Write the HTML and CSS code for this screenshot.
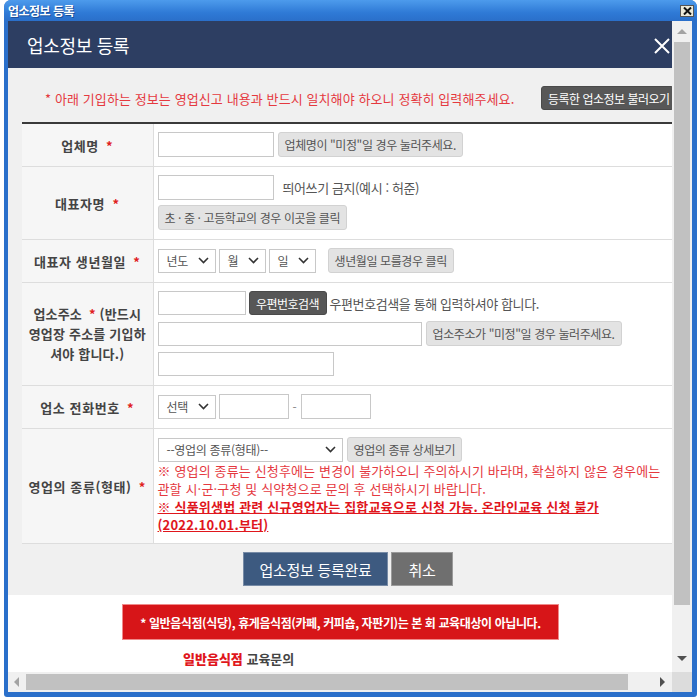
FILE: index.html
```html
<!DOCTYPE html>
<html lang="ko">
<head>
    <meta charset="UTF-8">
    <title>업소정보 등록</title>
    <link rel="stylesheet" href="styles.css">
</head>
<body>

<div class="window">
    <div class="titlebar">
        <span class="titlebar-text">업소정보 등록</span>
        <span class="titlebar-close">
            <svg width="9" height="8" viewBox="0 0 9 8"><path d="M1 0.5 L8 7.5 M8 0.5 L1 7.5" stroke="#111" stroke-width="2"/></svg>
        </span>
    </div>

    <div class="frame">
        <div class="viewport">
            <div class="modal">
                <div class="modal-head">
                    <h2>업소정보 등록</h2>
                    <span class="modal-x">
                        <svg width="16" height="16" viewBox="0 0 16 16"><path d="M1 1 L15 15 M15 1 L1 15" stroke="#fff" stroke-width="2"/></svg>
                    </span>
                </div>

                <div class="modal-body">
                    <!-- 안내 문구 -->
                    <div class="notice">
                        <p>* 아래 기입하는 정보는 영업신고 내용과 반드시 일치해야 하오니 정확히 입력해주세요.</p>
                        <button class="btn-dark btn-load">등록한 업소정보 불러오기</button>
                    </div>

                    <table class="form">
                        <colgroup>
                            <col class="col-label">
                            <col>
                        </colgroup>
                        <tr>
                            <th>업체명 <em>*</em></th>
                            <td>
                                <div class="line">
                                    <span class="input w116"></span>
                                    <button class="btn-gray">업체명이 "미정"일 경우 눌러주세요.</button>
                                </div>
                            </td>
                        </tr>
                        <tr>
                            <th>대표자명 <em>*</em></th>
                            <td>
                                <div class="line">
                                    <span class="input w116"></span>
                                    <span class="hint">띄어쓰기 금지(예시 : 허준)</span>
                                </div>
                                <div class="line">
                                    <button class="btn-gray">초 · 중 · 고등학교의 경우 이곳을 클릭</button>
                                </div>
                            </td>
                        </tr>
                        <tr>
                            <th>대표자 생년월일 <em>*</em></th>
                            <td>
                                <div class="line tight">
                                    <span class="select w58">년도 <svg width="11" height="7" viewBox="0 0 11 7"><path d="M1 1 L5.5 5.5 L10 1" fill="none" stroke="#333" stroke-width="1.6"/></svg></span>
                                    <span class="select w47">월 <svg width="11" height="7" viewBox="0 0 11 7"><path d="M1 1 L5.5 5.5 L10 1" fill="none" stroke="#333" stroke-width="1.6"/></svg></span>
                                    <span class="select w47">일 <svg width="11" height="7" viewBox="0 0 11 7"><path d="M1 1 L5.5 5.5 L10 1" fill="none" stroke="#333" stroke-width="1.6"/></svg></span>
                                    <button class="btn-gray gap-left">생년월일 모를경우 클릭</button>
                                </div>
                            </td>
                        </tr>
                        <tr>
                            <th class="multi">업소주소 <em>*</em> (반드시<br>영업장 주소를 기입하<br>셔야 합니다.)</th>
                            <td>
                                <div class="line rows6 tight">
                                    <span class="input w88"></span>
                                    <button class="btn-dark btn-zip">우편번호검색</button>
                                    <span class="hint">우편번호검색을 통해 입력하셔야 합니다.</span>
                                </div>
                                <div class="line rows6">
                                    <span class="input w264"></span>
                                    <button class="btn-gray">업소주소가 "미정"일 경우 눌러주세요.</button>
                                </div>
                                <div class="line rows6">
                                    <span class="input w176"></span>
                                </div>
                            </td>
                        </tr>
                        <tr>
                            <th>업소 전화번호 <em>*</em></th>
                            <td>
                                <div class="line tight">
                                    <span class="select w58">선택 <svg width="11" height="7" viewBox="0 0 11 7"><path d="M1 1 L5.5 5.5 L10 1" fill="none" stroke="#333" stroke-width="1.6"/></svg></span>
                                    <span class="input w70"></span>
                                    <span class="dash">-</span>
                                    <span class="input w70"></span>
                                </div>
                            </td>
                        </tr>
                        <tr>
                            <th>영업의 종류(형태) <em>*</em></th>
                            <td>
                                <div class="line">
                                    <span class="select w185">--영업의 종류(형태)-- <svg width="11" height="7" viewBox="0 0 11 7"><path d="M1 1 L5.5 5.5 L10 1" fill="none" stroke="#333" stroke-width="1.6"/></svg></span>
                                    <button class="btn-gray">영업의 종류 상세보기</button>
                                </div>
                                <p class="warn">※ 영업의 종류는 신청후에는 변경이 불가하오니 주의하시기 바라며, 확실하지 않은 경우에는 관할 시·군·구청 및 식약청으로 문의 후 선택하시기 바랍니다.</p>
                                <p class="warn strong">※ 식품위생법 관련 신규영업자는 집합교육으로 신청 가능. 온라인교육 신청 불가 (2022.10.01.부터)</p>
                            </td>
                        </tr>
                    </table>

                    <div class="actions">
                        <button class="btn-submit">업소정보 등록완료</button>
                        <button class="btn-cancel">취소</button>
                    </div>
                </div>

                <div class="modal-foot">
                    <div class="alert">* 일반음식점(식당), 휴게음식점(카페, 커피숍, 자판기)는 본 회 교육대상이 아닙니다.</div>
                    <p class="contact"><b>일반음식점</b> 교육문의</p>
                </div>
            </div>
        </div>

        <!-- 스크롤바 -->
        <div class="vscroll">
            <span class="arrow up"></span>
            <span class="vthumb"></span>
            <span class="arrow down"></span>
        </div>
        <div class="hscroll">
            <span class="arrow left"></span>
            <span class="hthumb"></span>
            <span class="arrow right"></span>
        </div>
        <div class="corner"></div>
    </div>
</div>

</body>
</html>
```

FILE: styles.css
```css
* {
    margin: 0;
    padding: 0;
    box-sizing: border-box;
}

body {
    font-family: 'Noto Sans CJK KR', 'Noto Sans', sans-serif;
    background: #fff;
    width: 700px;
    height: 700px;
    overflow: hidden;
}

button {
    font-family: inherit;
    cursor: pointer;
}

/* 창 테두리 */
.window {
    margin-left: 4px;
    width: 693px;
    height: 697px;
    background: #2a6fca;
    border-radius: 7px 7px 3px 3px;
    display: flex;
    flex-direction: column;
}

.titlebar {
    height: 21px;
    display: flex;
    align-items: center;
    justify-content: space-between;
    padding: 0 3px 0 4px;
    background: linear-gradient(#4d9bec, #2f7ad6 60%, #2a6fca);
    border-radius: 7px 7px 0 0;
}

.titlebar-text {
    color: #fff;
    font-size: 12px;
    font-weight: bold;
    letter-spacing: -0.5px;
    text-shadow: 1px 1px 0 #1b4f9a;
}

.titlebar-close {
    width: 14px;
    height: 12px;
    background: #ece9d8;
    border: 1px solid #555;
    display: flex;
    align-items: center;
    justify-content: center;
}

.frame {
    flex: 1;
    margin: 0 5px 5px 4px;
    display: grid;
    grid-template-columns: 664px 20px;
    grid-template-rows: 651px 20px;
}

.viewport {
    overflow: hidden;
    background: #fff;
}

/* 모달 */
.modal {
    width: 680px;
}

.modal-head {
    height: 47px;
    background: #2d3e62;
    display: flex;
    align-items: center;
    justify-content: space-between;
    padding: 0 18px 0 19px;
}

.modal-head h2 {
    color: #fff;
    font-size: 18px;
    font-weight: normal;
    letter-spacing: -0.3px;
}

.modal-x {
    display: flex;
    margin-top: 2px;
}

.modal-body {
    background: #f0f0f0;
    padding: 0 14px;
}

.notice {
    display: flex;
    align-items: center;
    padding: 18px 0 12px 23px;
}

.notice p {
    color: #e5393f;
    font-size: 13px;
    letter-spacing: 0.1px;
}

.btn-load {
    margin-left: auto;
    height: 24px;
    width: 133px;
    text-align: left;
    padding-left: 6px;
}

.btn-dark {
    background: #575757;
    color: #fff;
    border: 1px solid #4a4a4a;
    border-radius: 3px;
    font-size: 12px;
    letter-spacing: -0.5px;
}

.btn-gray {
    background: #e3e3e3;
    color: #555;
    border: 1px solid #d2d2d2;
    border-radius: 3px;
    font-size: 12px;
    letter-spacing: -0.4px;
    height: 25px;
    padding: 0 6px;
}

/* 입력 표 */
.form {
    width: 652px;
    table-layout: fixed;
    border-collapse: collapse;
    border-top: 2px solid #3a3a3a;
    background: #fff;
}

.col-label {
    width: 131px;
}

.form th {
    background: #f6f6f6;
    color: #444;
    font-size: 13px;
    font-weight: bold;
    letter-spacing: 0.6px;
    text-align: center;
    vertical-align: middle;
    border-right: 1px solid #ddd;
    border-bottom: 1px solid #ddd;
    padding: 0;
    white-space: nowrap;
}

.form th.multi {
    line-height: 20px;
    letter-spacing: 0.2px;
}

.form th em {
    color: #e02020;
    font-style: normal;
    margin-left: 3px;
}

.form td {
    border-bottom: 1px solid #ddd;
    padding: 8px 5px 9px 4px;
    vertical-align: top;
}

.line {
    display: flex;
    align-items: center;
    gap: 4px;
}

.line + .line {
    margin-top: 5px;
}

.line.rows6 + .line.rows6 {
    margin-top: 6px;
}

.line.tight {
    gap: 3px;
}

.input {
    display: block;
    height: 25px;
    border: 1px solid #c8c8c8;
    background: #fff;
}

.rows6 .input {
    height: 24px;
}

.w58 { width: 58px; }
.w47 { width: 47px; }
.w70 { width: 70px; }
.w88 { width: 88px; }
.w116 { width: 116px; }
.w176 { width: 176px; }
.w185 { width: 185px; }
.w264 { width: 264px; }

.select {
    height: 24px;
    border: 1px solid #c8c8c8;
    background: #fff;
    display: flex;
    align-items: center;
    justify-content: space-between;
    padding: 0 6px 0 8px;
    color: #555;
    font-size: 12px;
    letter-spacing: -0.3px;
}

.hint {
    color: #555;
    font-size: 13px;
    letter-spacing: -0.4px;
    margin-left: 5px;
}

.btn-zip {
    height: 24px;
    width: 78px;
    padding: 0;
}

.btn-zip + .hint {
    margin-left: 0;
}

.gap-left {
    margin-left: 9px;
}

.dash {
    color: #888;
    font-size: 12px;
    margin: 0 1px;
}

.warn {
    color: #e5393f;
    font-size: 13px;
    line-height: 18px;
    letter-spacing: 0.15px;
    width: 512px;
}

.warn.strong {
    color: #e0161c;
    font-weight: bold;
    text-decoration: underline;
    letter-spacing: 0.2px;
    width: 470px;
}

.actions {
    display: flex;
    justify-content: center;
    gap: 3px;
    padding: 8px 0 9px;
}

.btn-submit,
.btn-cancel {
    height: 34px;
    color: #fff;
    font-size: 15px;
    border: 1px solid rgba(255, 255, 255, 0.3);
    letter-spacing: -0.3px;
}

.btn-submit {
    width: 145px;
    background: #3d5a80;
}

.btn-cancel {
    width: 62px;
    background: #6f6f6f;
}

.modal-foot {
    background: #fff;
    padding-top: 9px;
    height: 140px;
}

.alert {
    width: 437px;
    height: 36px;
    margin-left: 114px;
    background: #d71518;
    border: 1px solid #ef8a8a;
    color: #fff;
    font-size: 12px;
    font-weight: bold;
    letter-spacing: -0.4px;
    display: flex;
    align-items: center;
    justify-content: center;
}

.contact {
    margin: 10px 0 0 175px;
    font-size: 13px;
    font-weight: bold;
    color: #444;
    line-height: 18px;
}

.contact b {
    color: #e0161c;
}

/* 스크롤바 */
.vscroll,
.hscroll {
    background: #f0f0f0;
    display: flex;
    align-items: center;
}

.vscroll {
    flex-direction: column;
    padding: 0 2px;
}

.hscroll {
    padding: 2px 0;
}

.vthumb {
    display: block;
    width: 16px;
    height: 563px;
    background: #c1c1c1;
}

.hthumb {
    display: block;
    height: 16px;
    width: 602px;
    background: #c1c1c1;
}

.arrow {
    display: block;
    width: 0;
    height: 0;
    border: 5px solid transparent;
}

.arrow.up {
    border-bottom-color: #a3a3a3;
    border-top-width: 0;
    margin: 8px 0 8px;
}

.arrow.down {
    border-top-color: #505050;
    border-bottom-width: 0;
    margin-top: auto;
    margin-bottom: 11px;
}

.arrow.left {
    border-right-color: #a3a3a3;
    border-left-width: 0;
    margin: 0 7px 0 6px;
}

.arrow.right {
    border-left-color: #505050;
    border-right-width: 0;
    margin-left: auto;
    margin-right: 7px;
}

.corner {
    background: #dcdcdc;
}
```
